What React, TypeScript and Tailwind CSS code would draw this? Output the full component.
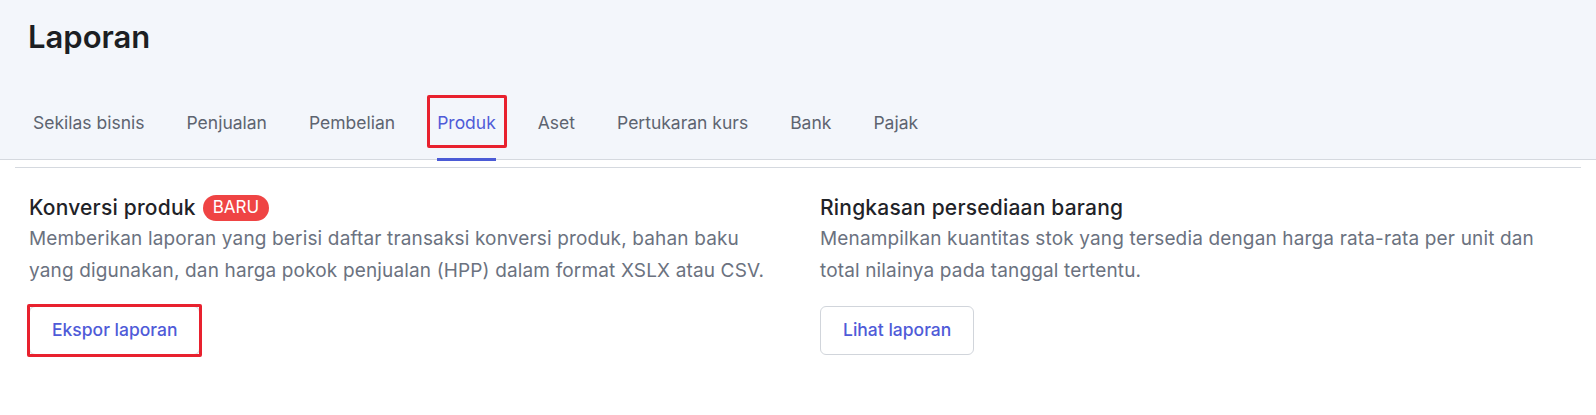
const tabs = ["Sekilas bisnis", "Penjualan", "Pembelian", "Produk", "Aset", "Pertukaran kurs", "Bank", "Pajak"];

export default function App() {
  const active = "Produk";

  return (
    <div className="min-h-screen w-full bg-white font-['Inter',sans-serif]">
      {/* Header */}
      <header className="flex h-[160px] flex-col border-b border-[#d5d9df] bg-[#f3f6fb] px-[28px] pt-[17px]">
        <h1 className="text-[31px] font-semibold leading-[40px] text-[#1c1f23]">Laporan</h1>
        <nav className="-mb-[2px] mt-auto flex gap-[42px] pl-[5px]">
          {tabs.map((t) => (
            <div
              key={t}
              className={`relative border-b-[3px] pb-[23px] text-[17.5px] leading-[24px] ${
                t === active ? "border-[#4b5bd6] text-[#4f5bd8]" : "border-transparent text-[#5d6470]"
              }`}
            >
              {t}
              {t === active && (
                <span className="pointer-events-none absolute -left-[10px] -right-[11px] -top-[16px] bottom-[10px] rounded-[2px] border-[3px] border-[#e8212e]" />
              )}
            </div>
          ))}
        </nav>
      </header>

      {/* Content */}
      <div className="mx-[15px] mt-[7px] border-t border-[#d5d9df] px-[14px] pt-[25px]">
        <div className="grid grid-cols-[747px_747px] gap-[44px]">
          <section>
            <div className="flex items-center">
              <h2 className="text-[21px] font-medium leading-[30px] tracking-[0.2px] text-[#1f2328]">Konversi produk</h2>
              <span className="ml-[7px] flex h-[26px] items-center rounded-full bg-[#ef4444] px-[10px] text-[17px] text-white">
                BARU
              </span>
            </div>
            <p className="text-[19px] leading-[32px] tracking-[0.15px] text-[#6b7280]">
              Memberikan laporan yang berisi daftar transaksi konversi produk, bahan baku yang digunakan, dan harga pokok
              penjualan (HPP) dalam format XSLX atau CSV.
            </p>
            <div className="relative mt-[19px] inline-block">
              <button className="h-[49px] rounded-md border border-[#d1d5db] bg-white px-[22px] text-[17.5px] font-medium text-[#4f5bd8]">
                Ekspor laporan
              </button>
              <span className="pointer-events-none absolute -inset-[2px] rounded-[2px] border-[3px] border-[#e8212e]" />
            </div>
          </section>

          <section>
            <h2 className="text-[21px] font-medium leading-[30px] tracking-[0.2px] text-[#1f2328]">
              Ringkasan persediaan barang
            </h2>
            <p className="text-[19px] leading-[32px] tracking-[0.15px] text-[#6b7280]">
              Menampilkan kuantitas stok yang tersedia dengan harga rata-rata per unit dan total nilainya pada tanggal
              tertentu.
            </p>
            <button className="mt-[19px] h-[49px] rounded-md border border-[#d1d5db] bg-white px-[22px] text-[17.5px] font-medium text-[#4f5bd8]">
              Lihat laporan
            </button>
          </section>
        </div>
      </div>
    </div>
  );
}
